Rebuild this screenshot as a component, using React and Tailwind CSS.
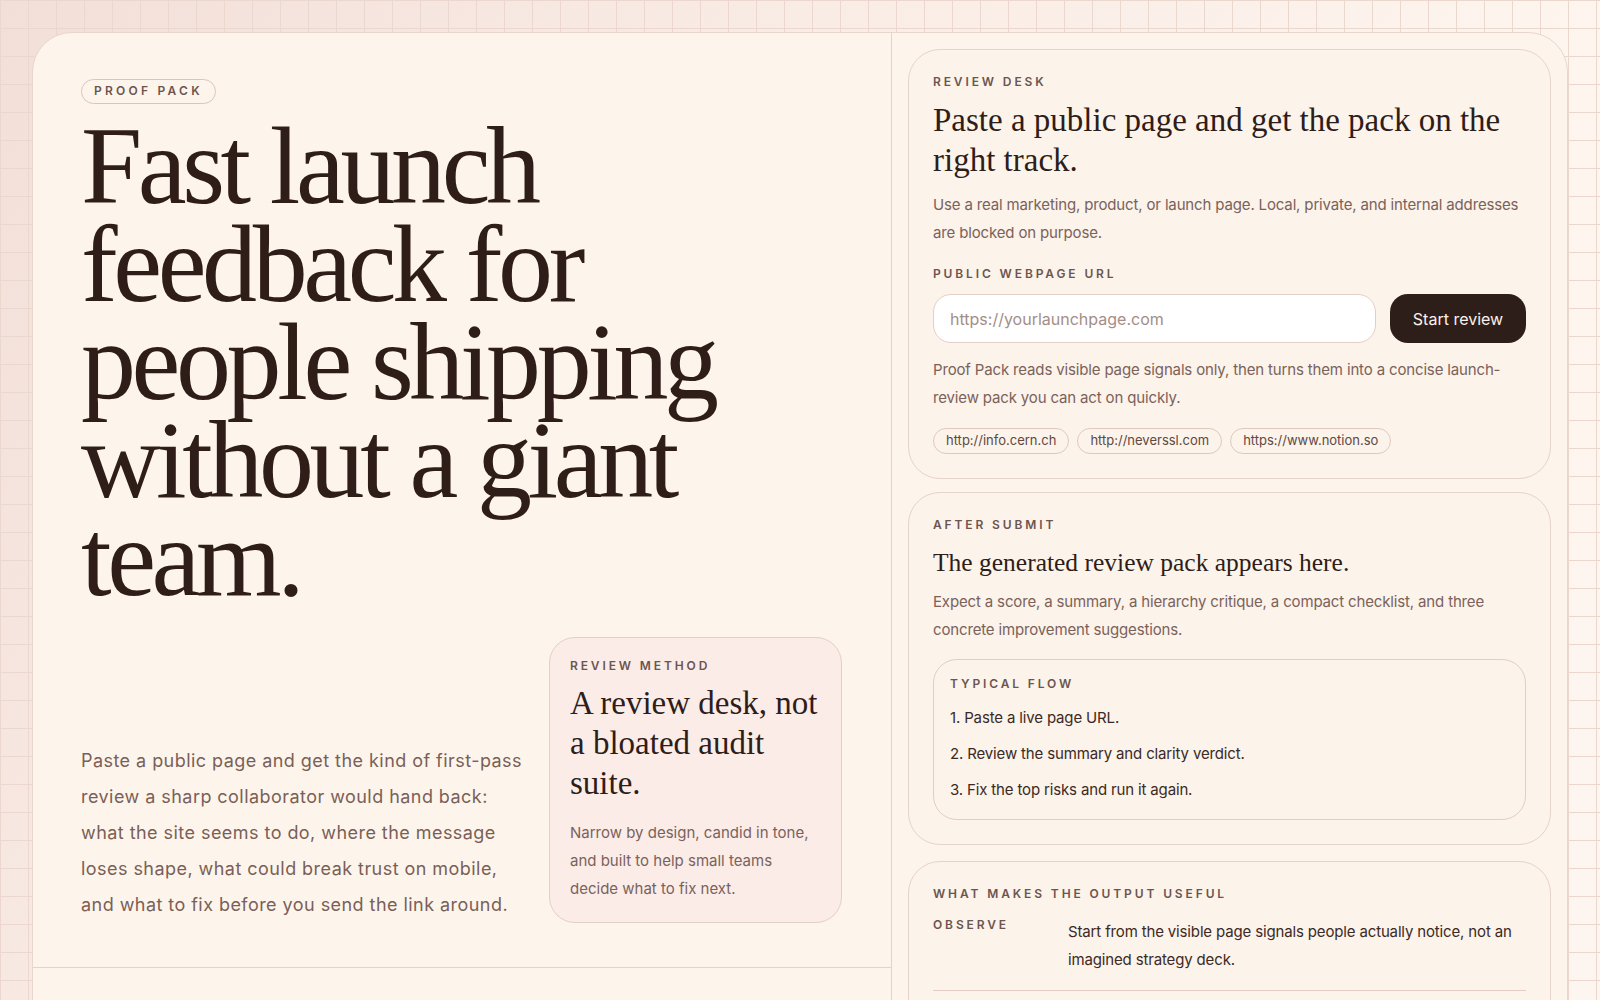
import React from 'react'

const serif = "font-['Liberation_Serif',serif]"
const sans = "font-['Inter',sans-serif]"

function Label({ children, className = '' }) {
  return (
    <div className={`${sans} text-[12px] font-semibold uppercase leading-4 tracking-[0.24em] text-[#6c554f] ${className}`}>
      {children}
    </div>
  )
}

function Panel({ children, className = '' }) {
  return (
    <section className={`rounded-[32px] border border-[#e6d3c9] bg-[#fcf3ea] px-6 pt-6 pb-6 ${className}`}>
      {children}
    </section>
  )
}

const samples = ['http://info.cern.ch', 'http://neverssl.com', 'https://www.notion.so']

const flow = [
  '1. Paste a live page URL.',
  '2. Review the summary and clarity verdict.',
  '3. Fix the top risks and run it again.',
]

const useful = [
  ['Observe', 'Start from the visible page signals people actually notice, not an imagined strategy deck.'],
  ['Diagnose', 'Name where the message loses shape and what could break trust on a small screen.'],
  ['Prioritize', 'Rank the fixes so the next edit is obvious, small and worth shipping today.'],
]

export default function App() {
  return (
    <div className="min-h-screen bg-[linear-gradient(120deg,#f2dfd8_0%,#f9ece5_35%,#fdf5ee_70%,#fdf6f0_100%)]">
      <div className="min-h-screen bg-[image:linear-gradient(to_right,#ecd7ce_1px,transparent_1px),linear-gradient(to_bottom,#ecd7ce_1px,transparent_1px)] bg-[size:28px_28px] p-8 pb-0">
        <main className="grid grid-cols-[858px_1fr] overflow-hidden rounded-t-[40px] border border-[#e8d6cc] bg-[#fdf5eb]">
          {/* Left: pitch */}
          <div className="flex flex-col">
            <div className="border-b border-[#e6d2c8] px-12 pt-11 pb-[44px]">
              <span className={`${sans} inline-flex h-[25px] items-center rounded-full border border-[#dcc5bb] px-3 text-[12px] font-semibold uppercase tracking-[0.27em] text-[#6c554f]`}>
                Proof Pack
              </span>
              <h1 className={`${serif} mt-[13px] text-[110px] leading-[98px] tracking-[-0.04em] text-[#2e1d18]`}>
                Fast launch
                <br />
                feedback for
                <br />
                people shipping
                <br />
                without a giant
                <br />
                team.
              </h1>
              <div className="mt-[30px] flex items-end gap-6">
                <p className={`${sans} w-[444px] whitespace-nowrap text-[18px] leading-9 tracking-[0.025em] text-[#7a5f58]`}>
                  Paste a public page and get the kind of first-pass
                  <br />
                  review a sharp collaborator would hand back:
                  <br />
                  what the site seems to do, where the message
                  <br />
                  loses shape, what could break trust on mobile,
                  <br />
                  and what to fix before you send the link around.
                </p>
                <div className="w-[293px] rounded-[26px] border border-[#e4cfc6] bg-[#fbece8] px-5 pt-5 pb-[19px]">
                  <Label>Review method</Label>
                  <h2 className={`${serif} mt-[9px] text-[33px] leading-10 text-[#2e1d18]`}>
                    A review desk, not a bloated audit suite.
                  </h2>
                  <p className={`${sans} mt-[16px] text-[15px] leading-7 text-[#7a625b]`}>
                    Narrow by design, candid in tone, and built to help small teams decide what to fix next.
                  </p>
                </div>
              </div>
            </div>
            <div className="h-40" />
          </div>

          {/* Right: review desk */}
          <div className="flex flex-col gap-[13px] border-l border-[#e6d2c8] p-4">
            <Panel>
              <Label>Review desk</Label>
              <h2 className={`${serif} mt-[10px] text-[33px] leading-10 text-[#2e1d18]`}>
                Paste a public page and get the pack on the right track.
              </h2>
              <p className={`${sans} mt-[11px] text-[15px] leading-7 tracking-[-0.01em] text-[#7a625b]`}>
                Use a real marketing, product, or launch page. Local, private, and internal addresses are blocked on purpose.
              </p>
              <Label className="mt-[19px]">Public webpage URL</Label>
              <div className="mt-[12px] flex gap-[14px]">
                <input
                  type="text"
                  placeholder="https://yourlaunchpage.com"
                  className={`${sans} h-[49px] flex-1 rounded-[18px] border border-[#e3cfc5] bg-white px-4 text-[16px] text-[#2e1d18] outline-none placeholder:text-[#a38e87]`}
                />
                <button className={`${sans} h-[49px] w-[136px] rounded-[18px] bg-[#2e1e19] text-[16px] text-[#fbf1ea]`}>
                  Start review
                </button>
              </div>
              <p className={`${sans} mt-[13px] text-[15px] leading-7 tracking-[-0.01em] text-[#7a625b]`}>
                Proof Pack reads visible page signals only, then turns them into a concise launch-review pack you can act on quickly.
              </p>
              <div className="mt-[16px] flex gap-2">
                {samples.map((s) => (
                  <button
                    key={s}
                    className={`${sans} h-[26px] rounded-full border border-[#dfc9bf] px-3 text-[13px] text-[#5e4842]`}
                  >
                    {s}
                  </button>
                ))}
              </div>
            </Panel>

            <Panel>
              <Label>After submit</Label>
              <h2 className={`${serif} mt-[14px] text-[25.5px] leading-8 text-[#2e1d18]`}>
                The generated review pack appears here.
              </h2>
              <p className={`${sans} mt-[9px] text-[15px] leading-7 tracking-[-0.01em] text-[#7a625b]`}>
                Expect a score, a summary, a hierarchy critique, a compact checklist, and three concrete improvement suggestions.
              </p>
              <div className="mt-[15px] rounded-[24px] border border-[#e3cec5] px-4 pt-[16px] pb-[11px]">
                <Label>Typical flow</Label>
                <ol className={`${sans} mt-[8px] text-[15px] leading-9 tracking-[-0.01em] text-[#3b2a25]`}>
                  {flow.map((f) => (
                    <li key={f}>{f}</li>
                  ))}
                </ol>
              </div>
            </Panel>

            <Panel className="mt-[3px]">
              <Label>What makes the output useful</Label>
              <div className="mt-[10px]">
                {useful.map(([k, v], i) => (
                  <div
                    key={k}
                    className={`grid grid-cols-[135px_1fr] pb-4 ${i > 0 ? 'pt-4' : ''} ${i < useful.length - 1 ? 'border-b border-[#e3cec5]' : ''}`}
                  >
                    <Label className="pt-[5px]">{k}</Label>
                    <p className={`${sans} pt-[6px] text-[15px] leading-7 tracking-[-0.01em] text-[#3b2a25]`}>{v}</p>
                  </div>
                ))}
              </div>
            </Panel>
          </div>
        </main>
      </div>
    </div>
  )
}
